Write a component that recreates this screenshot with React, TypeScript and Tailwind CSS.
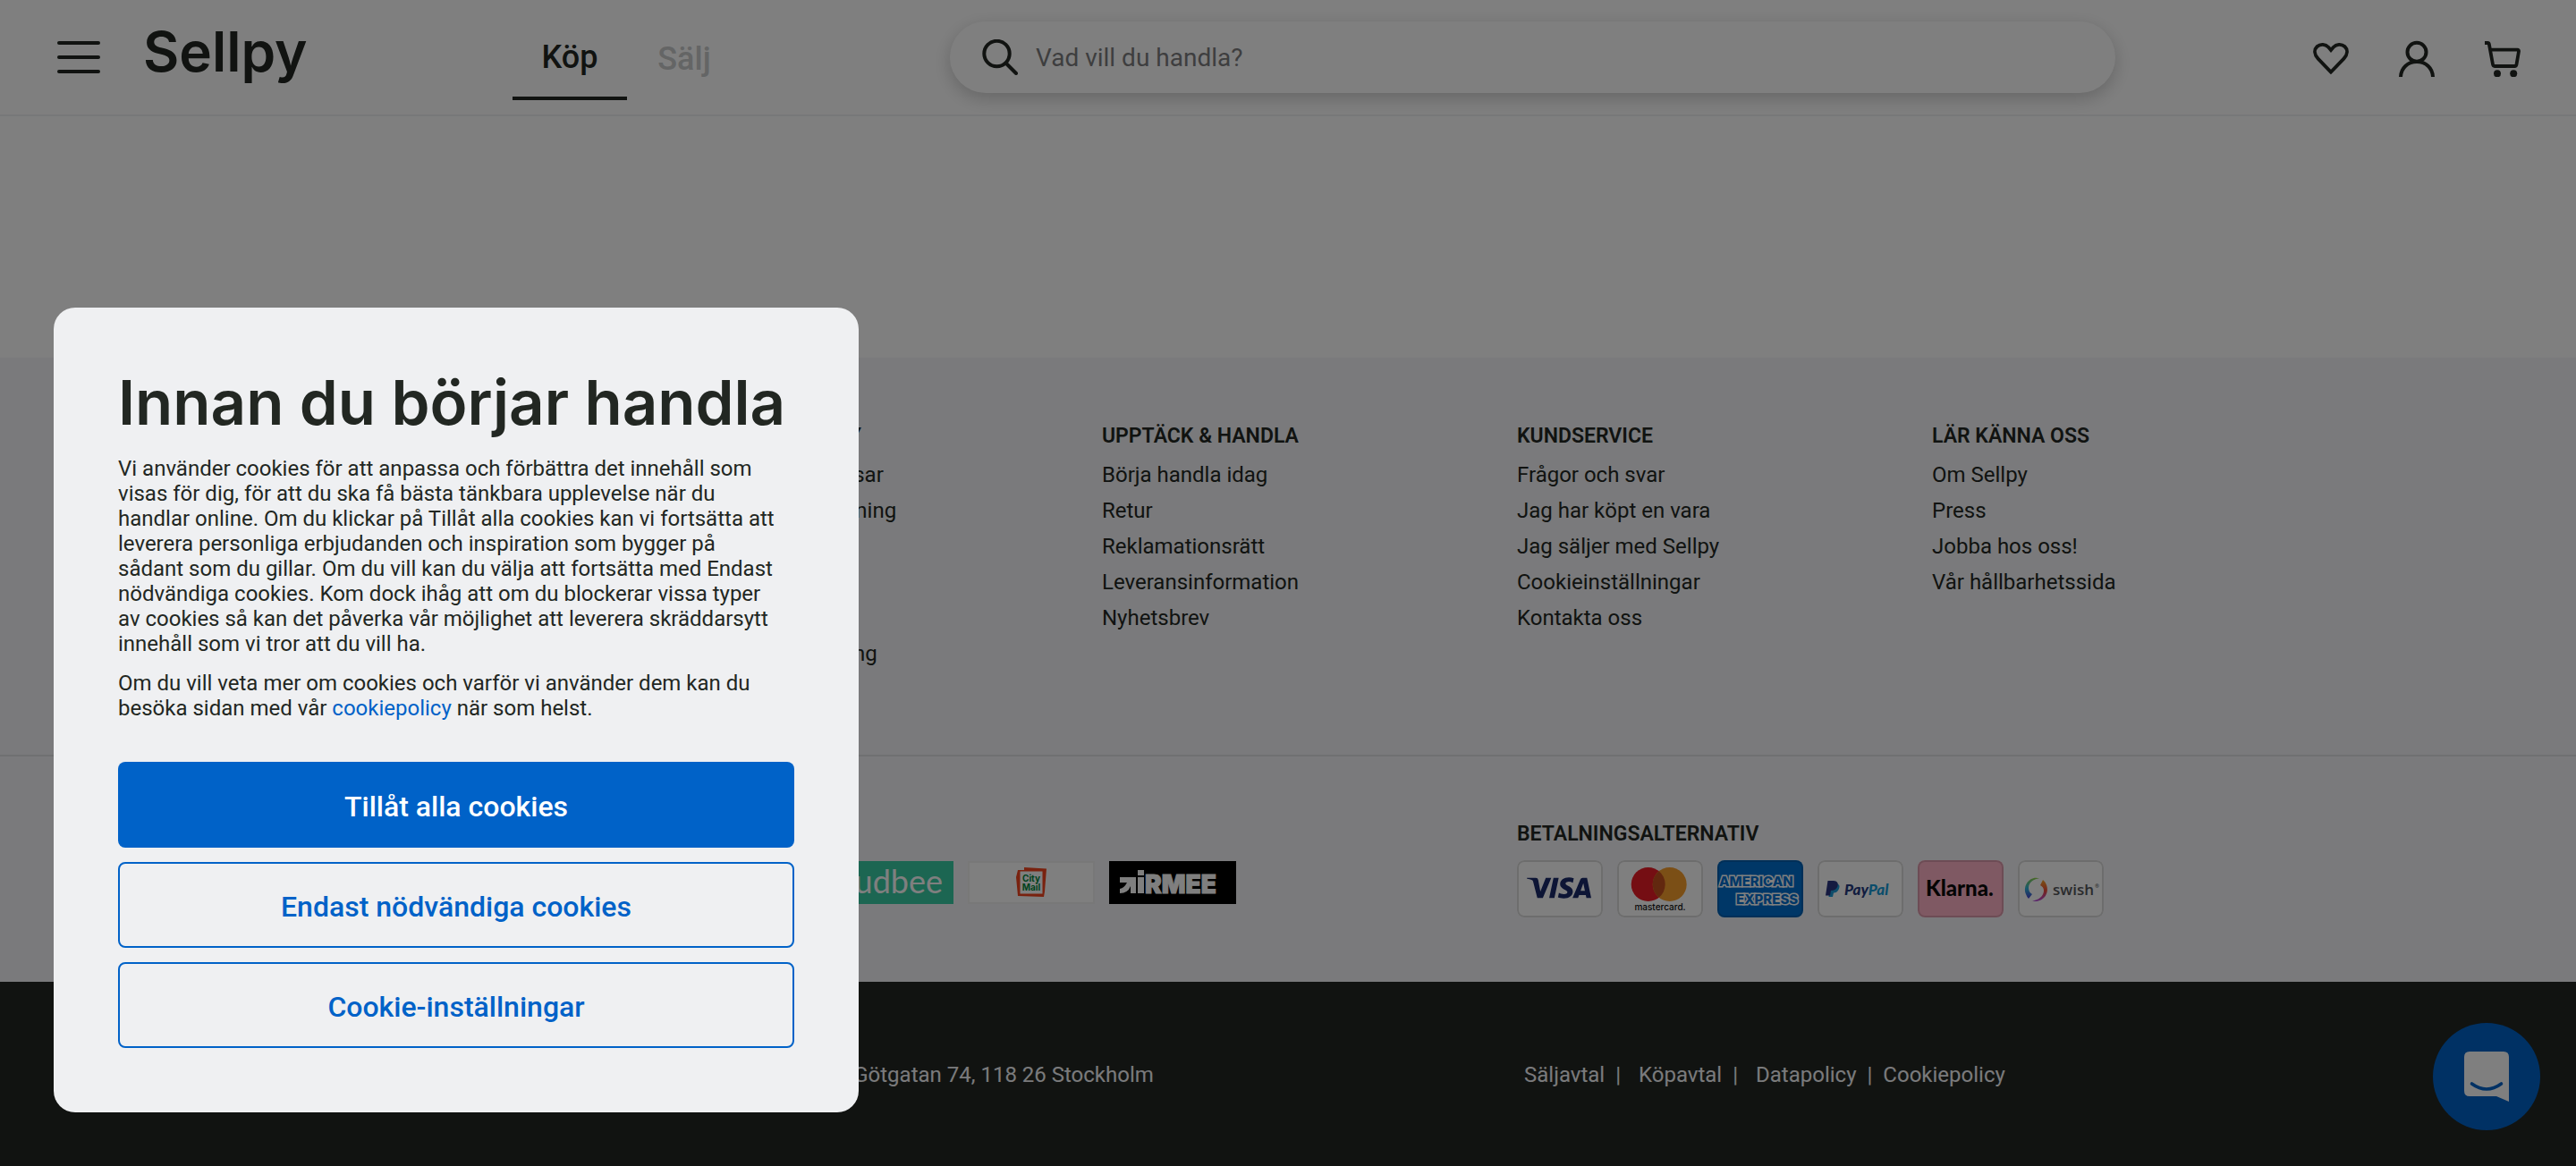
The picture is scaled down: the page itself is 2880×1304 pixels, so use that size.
import type { ReactNode } from 'react';
import { SiVisa } from 'react-icons/si';

const linkColumns = [
  {
    title: 'SÄLJ MED SELLPY',
    links: ['Beställ Sellpy-kassar', 'Så funkar prissättning', 'Priser', 'Villkor', 'Avgifter', 'Skicka din sändning'],
  },
  {
    title: 'UPPTÄCK & HANDLA',
    links: ['Börja handla idag', 'Retur', 'Reklamationsrätt', 'Leveransinformation', 'Nyhetsbrev'],
  },
  {
    title: 'KUNDSERVICE',
    links: ['Frågor och svar', 'Jag har köpt en vara', 'Jag säljer med Sellpy', 'Cookieinställningar', 'Kontakta oss'],
  },
  {
    title: 'LÄR KÄNNA OSS',
    links: ['Om Sellpy', 'Press', 'Jobba hos oss!', 'Vår hållbarhetssida'],
  },
];

const headingClass = 'text-[23px] leading-9 font-semibold whitespace-nowrap';

function HeartIcon() {
  return (
    <svg viewBox="0 0 40 44" className="h-11 w-10" fill="none" stroke="currentColor" strokeWidth="3.8">
      <path d="M20 38.6 L5.6 23.6 C1 18.6 1 13.4 4.6 10 C8.4 6.6 14 7.4 17.2 10.8 L20 14 L22.8 10.8 C26 7.4 31.6 6.6 35.4 10 C39 13.4 39 18.6 34.4 23.6 Z" />
    </svg>
  );
}

function UserIcon() {
  return (
    <svg viewBox="0 0 40 44" className="h-11 w-10" fill="none" stroke="currentColor" strokeWidth="4">
      <circle cx="20" cy="16.3" r="10.5" />
      <path d="M2 44 C2.4 34 10 27 20 27 C30 27 37.6 34 38 44" />
    </svg>
  );
}

function CartIcon() {
  return (
    <svg viewBox="0 0 40 44" className="h-11 w-10" fill="none" stroke="currentColor" strokeWidth="3.8" strokeLinejoin="round">
      <path d="M0 6 H3.2 Q4.6 6 4.9 7.6 L9 30 Q9.4 32 11 32 H33.5 Q35.2 32 35.5 30 L38 15.5 Q38.2 13.7 36.5 13.7 H6.5" />
      <circle cx="14" cy="40.3" r="4" fill="currentColor" stroke="none" />
      <circle cx="32.2" cy="40.3" r="4" fill="currentColor" stroke="none" />
    </svg>
  );
}

function Header() {
  return (
    <header className="flex h-[130px] items-center border-b-2 border-[#eff0f2] pr-[62px] pl-16">
      <button type="button" aria-label="Meny" className="flex w-12 shrink-0 flex-col gap-3">
        <span className="h-1 rounded-xs bg-[#222722]" />
        <span className="h-1 rounded-xs bg-[#222722]" />
        <span className="h-1 rounded-xs bg-[#222722]" />
      </button>
      <a href="#start" className="ml-12 w-[413px] shrink-0 pb-3 font-[Inter,sans-serif] text-[62px] leading-[72px] font-semibold">
        Sellpy
      </a>
      <nav className="flex h-24 shrink-0 text-[36px] font-medium">
        <a href="#kop" className="flex w-32 items-center justify-center border-b-4 border-[#222722] pt-1">
          Köp
        </a>
        <a href="#salj" className="flex w-32 items-center justify-center pt-1 text-[#c8cacb]">
          Sälj
        </a>
      </nav>
      <form
        role="search"
        className="mr-[221px] ml-[233px] flex h-20 flex-1 items-center rounded-full bg-white pl-9 shadow-[0_6px_20px_rgba(0,0,0,0.2)]"
      >
        <svg viewBox="0 0 40 40" className="size-10 shrink-0" fill="none" stroke="currentColor" strokeWidth="4" strokeLinecap="round">
          <circle cx="16.5" cy="16" r="14.2" />
          <path d="M26.5 26.5 L38 38" />
        </svg>
        <input
          type="search"
          aria-label="Sök"
          placeholder="Vad vill du handla?"
          className="ml-5 h-full flex-1 bg-transparent text-[28px] outline-none placeholder:text-[#7c7d7e]"
        />
      </form>
      <div className="flex shrink-0 gap-14">
        <button type="button" aria-label="Favoriter">
          <HeartIcon />
        </button>
        <button type="button" aria-label="Konto">
          <UserIcon />
        </button>
        <button type="button" aria-label="Varukorg">
          <CartIcon />
        </button>
      </div>
    </header>
  );
}

function CityMail() {
  return (
    <div className="flex h-12 w-[142px] items-center justify-center border-2 border-[#f0f0f0] bg-white">
      <svg viewBox="0 0 36 36" className="size-9" role="img" aria-label="City Mail">
        <path d="M10 1 L35 2.5 L33 28 L32 34 L3 33 L1 12 L3 4 L10 4 Z" fill="#f2451f" />
        <rect x="5.5" y="5.5" width="25" height="25" fill="#fff" />
        <text x="18" y="17" textAnchor="middle" fontFamily="Inter, sans-serif" fontWeight="700" fontSize="10" fill="#00853a">
          City
        </text>
        <text x="18" y="27" textAnchor="middle" fontFamily="Inter, sans-serif" fontWeight="700" fontSize="10" fill="#00853a">
          Mail
        </text>
      </svg>
    </div>
  );
}

function Airmee() {
  return (
    <svg viewBox="0 0 142 48" className="h-12 w-[142px]" role="img" aria-label="Airmee">
      <rect width="142" height="48" fill="#000" />
      <path d="M12 18 H30 V36 H24 V28 Q21 36 12 36 V31 Q17 30 20 24 H12 Z" fill="#fff" />
      <rect x="32" y="18" width="7" height="18" fill="#fff" />
      <rect x="32" y="10" width="7" height="6" fill="#fff" />
      <text x="40" y="36" fontFamily="Inter, sans-serif" fontWeight="900" fontSize="28" fill="#fff" stroke="#fff" strokeWidth="1">
        RMEE
      </text>
    </svg>
  );
}

function Card({ label, className, children }: { label: string; className: string; children: ReactNode }) {
  return (
    <svg viewBox="0 0 96 64" role="img" aria-label={label} className={`h-16 w-24 rounded-lg ${className}`}>
      {children}
      <rect x="1" y="1" width="94" height="62" rx="7" fill="none" stroke="#000" strokeOpacity="0.14" strokeWidth="2" />
    </svg>
  );
}

function PaymentCards() {
  return (
    <div className="flex gap-4">
      <Card label="Visa" className="bg-white">
        <SiVisa x="11" y="-5" size={72} color="#1a2b6b" />
      </Card>
      <Card label="Mastercard" className="bg-white">
        <circle cx="34.7" cy="27" r="19" fill="#eb1c26" />
        <circle cx="58.7" cy="27" r="19" fill="#f79e2c" />
        <path d="M46.7 12.3 A19 19 0 0 1 46.7 41.7 A19 19 0 0 1 46.7 12.3" fill="#c4501f" />
        <text x="48" y="56" textAnchor="middle" fontFamily="Inter, sans-serif" fontWeight="500" fontSize="10" fill="#111">
          mastercard.
        </text>
      </Card>
      <Card label="American Express" className="bg-[#006fcf]">
        <g fontFamily="Inter, sans-serif" fontWeight="800" fontSize="15" fill="#006fcf" stroke="#fff" strokeWidth="3" paintOrder="stroke">
          <text x="2" y="29">
            AMERICAN
          </text>
          <text x="21" y="49">
            EXPRESS
          </text>
        </g>
      </Card>
      <Card label="PayPal" className="bg-white">
        <path d="M14 26 H21 Q26 27 24 32 Q22 36.5 18 36.5 L17 41 H12.5 Z" fill="#1d9ad6" />
        <path d="M11.5 23 H18 Q24 23.5 22.5 29 Q21 34 15 34 L14 39.5 H9 Z" fill="#2a3580" />
        <text x="30" y="39" fontFamily="Lato, sans-serif" fontStyle="italic" fontWeight="900" fontSize="17" fill="#253b80">
          Pay<tspan fill="#179bd7">Pal</tspan>
        </text>
      </Card>
      <Card label="Klarna" className="bg-[#ffb3c7]">
        <text x="9" y="40" fontFamily="Lato, sans-serif" fontWeight="900" fontSize="24" fill="#0b0b0b">
          Klarna.
        </text>
      </Card>
      <Card label="Swish" className="bg-white">
        <defs>
          <linearGradient id="swishLeft" x1="0" y1="0" x2="0" y2="1">
            <stop offset="0" stopColor="#8fd14a" />
            <stop offset="0.5" stopColor="#2fb5d8" />
            <stop offset="1" stopColor="#4a3fd0" />
          </linearGradient>
          <linearGradient id="swishRight" x1="0" y1="0" x2="0" y2="1">
            <stop offset="0" stopColor="#f5a623" />
            <stop offset="0.5" stopColor="#ee4a3a" />
            <stop offset="1" stopColor="#b04ae0" />
          </linearGradient>
        </defs>
        <path d="M24 20.5 C14 17 5 28 9 38 Q10 41 12 43 L16 38 Q12 36 12 31 C12 25 17 21 24 20.5 Z" fill="url(#swishLeft)" />
        <path d="M28 22 C33 26 35 35 30 41 C27 45 20 47 16 45.5 C23 45 29 40 29 34 Q29 30 25 28 Z" fill="url(#swishRight)" />
        <text x="39" y="39" fontFamily="Open Sans, sans-serif" fontWeight="600" fontSize="17" fill="#55565a">
          swish
        </text>
        <text x="86" y="31" fontFamily="Open Sans, sans-serif" fontWeight="600" fontSize="6" fill="#55565a">
          ®
        </text>
      </Card>
    </div>
  );
}

function Footer() {
  return (
    <footer className="flex flex-1 flex-col bg-[#f4f5f8]">
      <div className="border-b-2 border-[#dfe1e3] pt-[70px] pb-[93px]">
        <div className="mx-auto grid max-w-[2272px] grid-cols-5 gap-x-12">
          {linkColumns.map((column) => (
            <section key={column.title} className="first:col-start-2">
              <h2 className={headingClass}>{column.title}</h2>
              <ul className="mt-[5px] text-2xl leading-10">
                {column.links.map((label) => (
                  <li key={label}>
                    <a href="#info">{label}</a>
                  </li>
                ))}
              </ul>
            </section>
          ))}
        </div>
      </div>
      <div className="pt-[69px] pb-[72px]">
        <div className="mx-auto grid max-w-[2272px] grid-cols-5 gap-x-12">
          <section className="col-span-2 col-start-2">
            <h2 className={headingClass}>LEVERANS</h2>
            <div className="mt-3 flex gap-4">
              <div className="flex h-12 w-[141px] items-center justify-center bg-[#00a0d6] text-2xl font-bold text-white">postnord</div>
              <div className="flex h-12 w-[141px] items-center justify-end bg-[#38cca4] pr-3 pb-1 font-[Lato,sans-serif] text-[36px] text-white">
                budbee
              </div>
              <CityMail />
              <Airmee />
            </div>
          </section>
          <section className="col-span-2">
            <h2 className={`${headingClass} mb-[11px]`}>BETALNINGSALTERNATIV</h2>
            <PaymentCards />
          </section>
        </div>
      </div>
      <div className="flex-1 bg-[#222722] pt-[84px] pb-20 text-2xl leading-10 text-[#f4f5f8]">
        <div className="mx-auto grid max-w-[2272px] grid-cols-5 gap-x-12">
          <p className="col-span-2 col-start-2">Sellpy AB (publ) | Götgatan 74, 118 26 Stockholm</p>
          <nav className="col-span-2 flex pl-2 whitespace-nowrap">
            <a href="#saljavtal">Säljavtal</a>
            <span className="ml-3">|</span>
            <a href="#kopavtal" className="ml-5">
              Köpavtal
            </a>
            <span className="ml-3">|</span>
            <a href="#datapolicy" className="ml-5">
              Datapolicy
            </a>
            <span className="mx-3">|</span>
            <a href="#cookiepolicy">Cookiepolicy</a>
          </nav>
        </div>
      </div>
    </footer>
  );
}

function ChatButton() {
  return (
    <button
      type="button"
      aria-label="Öppna chatt"
      className="fixed right-10 bottom-10 flex size-[120px] items-center justify-center rounded-full bg-[#0062c8]"
    >
      <svg viewBox="0 0 50 56" className="h-14 w-[50px]">
        <path d="M6 0 H44 Q50 0 50 6 V56 L36 50 H6 Q0 50 0 44 V6 Q0 0 6 0 Z" fill="#fff" />
        <path d="M8.5 36 Q25 48 41.5 36" fill="none" stroke="#0062c8" strokeWidth="3.6" strokeLinecap="round" />
      </svg>
    </button>
  );
}

function CookieDialog() {
  const outlined = 'h-24 w-full rounded-lg border-2 border-[#0062c8] pt-1 text-[32px] font-medium text-[#0062c8]';
  return (
    <div
      role="dialog"
      aria-labelledby="cookie-title"
      className="fixed bottom-[60px] left-[60px] w-[900px] rounded-3xl bg-[#eff0f2] p-[72px]"
    >
      <h1 id="cookie-title" className="font-[Inter,sans-serif] text-[69px] leading-[68px] font-semibold whitespace-nowrap">
        Innan du börjar handla
      </h1>
      <div className="mt-[26px] space-y-4 text-2xl leading-7">
        <p>
          Vi använder cookies för att anpassa och förbättra det innehåll som
          <br />
          visas för dig, för att du ska få bästa tänkbara upplevelse när du
          <br />
          handlar online. Om du klickar på Tillåt alla cookies kan vi fortsätta att
          <br />
          leverera personliga erbjudanden och inspiration som bygger på
          <br />
          sådant som du gillar. Om du vill kan du välja att fortsätta med Endast
          <br />
          nödvändiga cookies. Kom dock ihåg att om du blockerar vissa typer
          <br />
          av cookies så kan det påverka vår möjlighet att leverera skräddarsytt
          <br />
          innehåll som vi tror att du vill ha.
        </p>
        <p>
          Om du vill veta mer om cookies och varför vi använder dem kan du
          <br />
          besöka sidan med vår{' '}
          <a href="#cookiepolicy" className="text-[#0062c8]">
            cookiepolicy
          </a>{' '}
          när som helst.
        </p>
      </div>
      <div className="mt-[46px] flex flex-col gap-4">
        <button type="button" className="h-24 w-full rounded-lg bg-[#0062c8] pt-1 text-[32px] font-medium text-white">
          Tillåt alla cookies
        </button>
        <button type="button" className={outlined}>
          Endast nödvändiga cookies
        </button>
        <button type="button" className={outlined}>
          Cookie-inställningar
        </button>
      </div>
    </div>
  );
}

export default function App() {
  return (
    <div className="flex min-h-screen flex-col bg-white font-[Roboto,sans-serif] text-[#222722]">
      <Header />
      <main className="h-[270px]" />
      <Footer />
      <ChatButton />
      <div className="fixed inset-0 bg-black/50" />
      <CookieDialog />
    </div>
  );
}
